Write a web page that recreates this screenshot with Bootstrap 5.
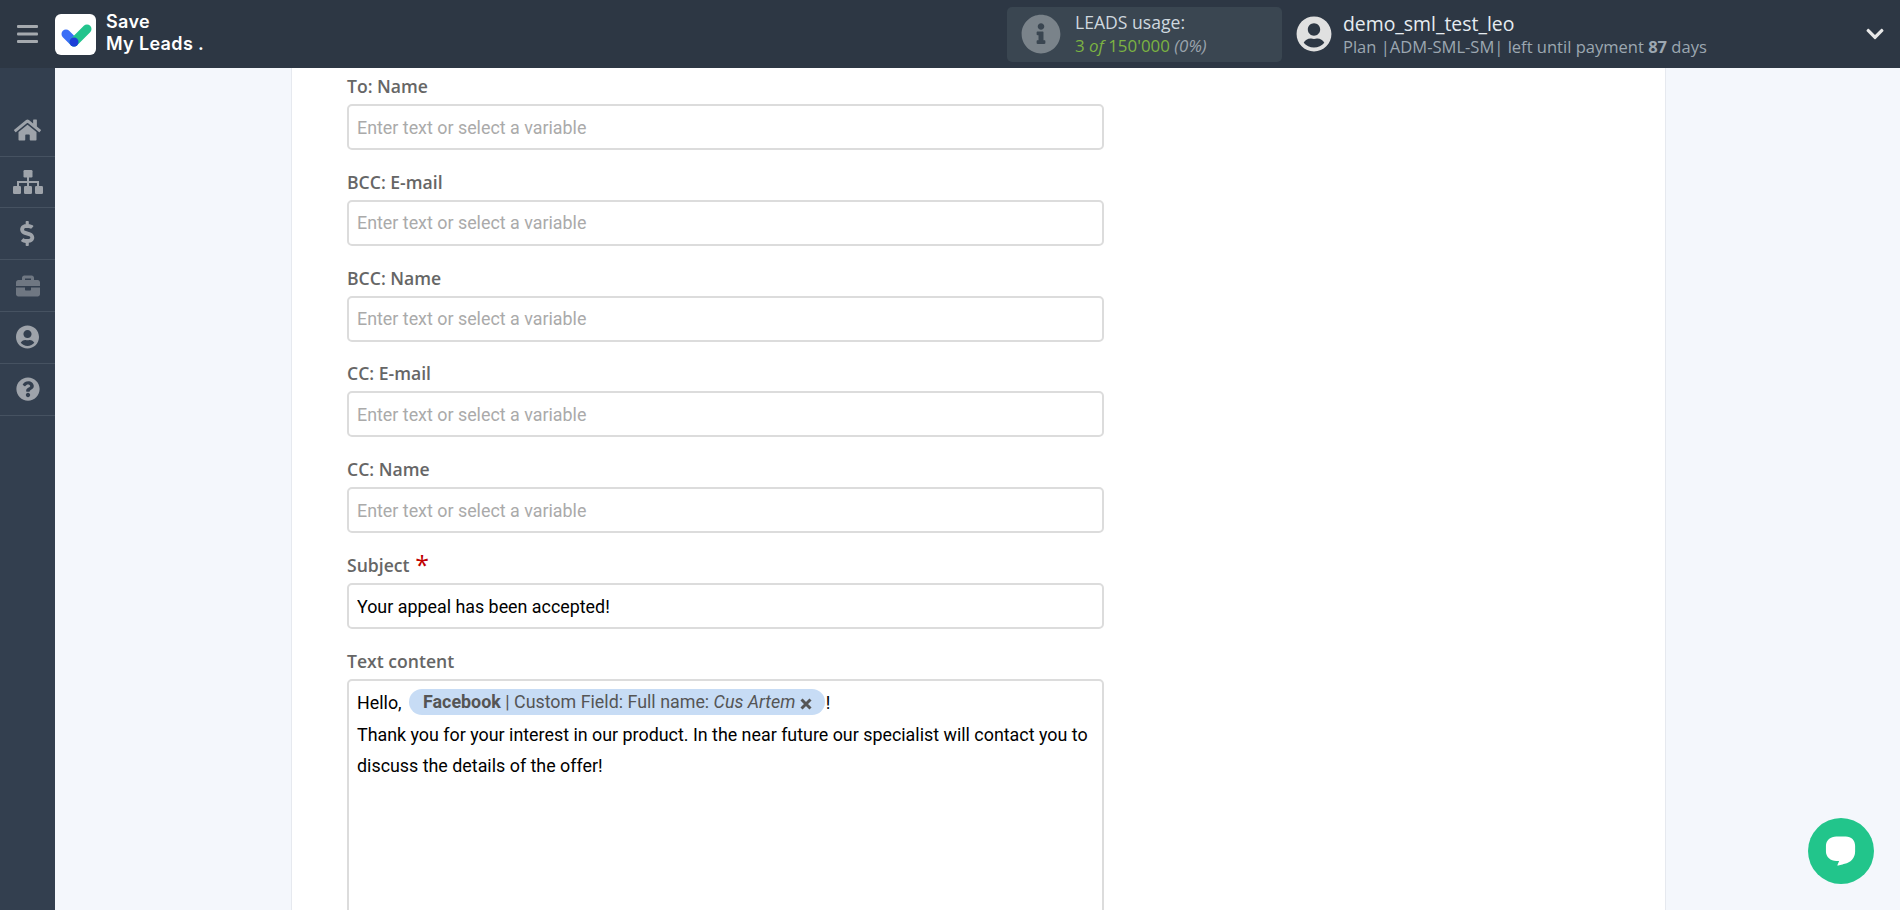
<!DOCTYPE html>
<html lang="en">
<head>
<meta charset="utf-8">
<title>Save My Leads</title>
<link href="https://cdn.jsdelivr.net/npm/bootstrap@5.3.0/dist/css/bootstrap.min.css" rel="stylesheet">
<style>
html,body{height:910px;overflow:hidden}
body{background:#f4f7fc;font-family:"Open Sans","Liberation Sans",sans-serif}
.topbar{height:68px;background:#2d3744}
.burger{width:55px;color:#a5aaaf}
.logo-box{width:41px;height:41px;background:#fff;border-radius:6px}
.logo-text{font-family:Inter,"Open Sans",sans-serif;font-weight:600;font-size:18px;line-height:22px;letter-spacing:.35px;color:#fff;margin-left:10px;margin-bottom:3px}
.usage{width:275px;height:55px;background:#3a4651;border-radius:5px;margin-left:auto;padding-left:14px;gap:14px}
.usage-title{font-size:17.6px;line-height:23px;color:#cfd8df}
.usage-line{font-size:16.9px;line-height:23px;color:#7cb342}
.usage-pct{color:#9aa4ad;font-style:italic}
.user-name{font-size:19.4px;line-height:25px;color:#e6ecf1}
.user-plan{font-size:16.55px;line-height:21px;color:#9ca7b1}
.user-block{width:618px;padding-left:14px}
.user-text{margin-left:11px}
.side{width:55px;height:842px;background:#333f4f;padding-top:36.8px}
.side-item{height:51.8px;border-bottom:1px solid #465261;color:#9ea3aa}
.side-item.dim{color:#6f7782}
.work{width:1375px;height:842px;margin-left:236px;background:#fff;border-left:1px solid #e6e9ef;border-right:1px solid #e6e9ef;padding:6px 0 0 55px}
.fld{width:757px;margin-bottom:19.83px}
.fld-label{font-size:17.6px;font-weight:600;line-height:24px;color:#666;margin-bottom:6px;display:block}
.req{color:#c00000;font-size:25px;line-height:16px;vertical-align:-2px;margin-left:1px;font-weight:400}
.fld-input{height:46px;border:2px solid #dcdcdc;border-radius:5px;padding:0 8px;font-family:Roboto,sans-serif;font-size:17.87px;color:#000}
.fld-input::placeholder{color:#aaa;opacity:1}
.txt-box{height:300px;border:2px solid #dcdcdc;border-radius:5px;padding:6.5px 8px;font-family:Roboto,sans-serif;font-size:17.87px;line-height:31.5px;color:#000}
.tag-pill{display:inline-block;height:26px;line-height:26px;background:#c7dcf5;color:#555;border-radius:13px;padding:0 13px 0 14px;margin:0 1px 0 3px;vertical-align:1px}
.tag-pill b{font-weight:700}
.chat-btn{position:absolute;left:1808px;top:818px;width:66px;height:66px;border-radius:50%;background:#22c58b}
</style>
</head>
<body>
<header class="topbar d-flex align-items-center">
  <div class="burger d-flex justify-content-center">
    <svg width="21" height="18" viewBox="0 0 21 18" fill="currentColor"><rect width="21" height="3" rx="1"/><rect y="7.5" width="21" height="3" rx="1"/><rect y="15" width="21" height="3" rx="1"/></svg>
  </div>
  <div class="logo-box d-flex align-items-center justify-content-center">
    <svg width="41" height="41" viewBox="0 0 41 41"><path d="M11 20l8 8" stroke="#3b6ef6" stroke-width="9" stroke-linecap="round"/><path d="M19 28L32 15" stroke="#22c48d" stroke-width="9" stroke-linecap="round"/><circle cx="19" cy="28" r="4.5" fill="#1c3fd8"/></svg>
  </div>
  <div class="logo-text">Save<br>My Leads .</div>
  <div class="usage d-flex align-items-center">
    <svg width="40" height="40" viewBox="0 0 512 512" fill="#7a838a"><path d="M256 8C119.043 8 8 119.083 8 256c0 136.997 111.043 248 248 248s248-111.003 248-248C504 119.083 392.957 8 256 8zm0 110c23.196 0 42 18.804 42 42s-18.804 42-42 42-42-18.804-42-42 18.804-42 42-42zm56 254c0 6.627-5.373 12-12 12h-88c-6.627 0-12-5.373-12-12v-24c0-6.627 5.373-12 12-12h12v-64h-12c-6.627 0-12-5.373-12-12v-24c0-6.627 5.373-12 12-12h64c6.627 0 12 5.373 12 12v100h12c6.627 0 12 5.373 12 12v24z"/></svg>
    <div>
      <div class="usage-title">LEADS usage:</div>
      <div class="usage-line">3 <i>of</i> 150'000 <span class="usage-pct">(0%)</span></div>
    </div>
  </div>
  <div class="user-block d-flex align-items-center">
    <svg width="36" height="36" viewBox="0 0 496 512" fill="#e0e0e0"><path d="M248 8C111 8 0 119 0 256s111 248 248 248 248-111 248-248S385 8 248 8zm0 96c48.6 0 88 39.4 88 88s-39.4 88-88 88-88-39.4-88-88 39.4-88 88-88zm0 344c-58.7 0-111.3-26.6-146.5-68.2 18.8-35.4 55.6-59.8 98.5-59.8 2.4 0 4.8.4 7.1 1.1 13 4.2 26.6 6.9 40.9 6.9 14.3 0 28-2.7 40.9-6.9 2.3-.7 4.7-1.1 7.1-1.1 42.9 0 79.7 24.4 98.5 59.8C359.3 421.4 306.7 448 248 448z"/></svg>
    <div class="user-text flex-grow-1">
      <div class="user-name">demo_sml_test_leo</div>
      <div class="user-plan">Plan |ADM-SML-SM| left until payment <b>87</b> days</div>
    </div>
    <svg class="me-3" width="18" height="20" viewBox="0 0 448 512" fill="#e8e8e8"><path d="M207.029 381.476L12.686 187.132c-9.373-9.373-9.373-24.569 0-33.941l22.667-22.667c9.357-9.357 24.522-9.375 33.901-.04L224 284.505l154.745-154.021c9.379-9.335 24.544-9.317 33.901.04l22.667 22.667c9.373 9.373 9.373 24.569 0 33.941L240.971 381.476c-9.373 9.372-24.569 9.372-33.942 0z"/></svg>
  </div>
</header>
<div class="d-flex">
  <nav class="side flex-shrink-0">
    <div class="side-item d-flex align-items-center justify-content-center"><svg width="27" height="24" viewBox="0 0 576 512" fill="currentColor"><path d="M280.37 148.26L96 300.11V464a16 16 0 0 0 16 16l112.06-.29a16 16 0 0 0 15.92-16V368a16 16 0 0 1 16-16h64a16 16 0 0 1 16 16v95.64a16 16 0 0 0 16 16.05L464 480a16 16 0 0 0 16-16V300L295.67 148.26a12.19 12.19 0 0 0-15.3 0zM571.6 251.47L488 182.56V44.05a12 12 0 0 0-12-12h-56a12 12 0 0 0-12 12v72.61L318.47 43a48 48 0 0 0-61 0L4.34 251.47a12 12 0 0 0-1.6 16.9l25.5 31A12 12 0 0 0 45.15 301l235.22-193.74a12.19 12.19 0 0 1 15.3 0L530.9 301a12 12 0 0 0 16.9-1.6l25.5-31a12 12 0 0 0-1.7-16.93z"/></svg></div>
    <div class="side-item d-flex align-items-center justify-content-center"><svg width="30" height="24" viewBox="0 0 30 24" fill="currentColor"><rect x="10.5" width="9" height="7.5" rx="1.2"/><rect y="16" width="8" height="8" rx="1.2"/><rect x="11" y="16" width="8" height="8" rx="1.2"/><rect x="22" y="16" width="8" height="8" rx="1.2"/><path d="M14 7h2v4h10v5h-2v-3h-8v3h-2v-3H6v3H4v-5h10z"/></svg></div>
    <div class="side-item d-flex align-items-center justify-content-center"><svg width="16" height="25" viewBox="0 0 320 512" fill="currentColor"><path d="M209.2 233.4l-108-31.6C88.7 198.2 80 186.5 80 173.5c0-16.3 13.2-29.5 29.5-29.5h66.3c12.2 0 24.2 3.7 34.2 10.5 6.1 4.1 14.3 3.1 19.5-2l34.8-34c7.1-6.9 6.1-18.4-1.8-24.5C238 74.8 207.4 64.1 176 64V16c0-8.8-7.2-16-16-16h-32c-8.8 0-16 7.2-16 16v48h-2.5C45.8 64-5.4 118.7.5 183.6c4.2 46.1 39.4 83.6 83.8 96.6l102.5 30c12.5 3.7 21.2 15.3 21.2 28.3 0 16.3-13.2 29.5-29.5 29.5h-66.3C100 368 88 364.3 78 357.5c-6.1-4.1-14.3-3.1-19.5 2l-34.8 34c-7.1 6.9-6.1 18.4 1.8 24.5 24.5 19.2 55.1 29.9 86.5 30v48c0 8.8 7.2 16 16 16h32c8.8 0 16-7.2 16-16v-48.2c46.6-.9 90.3-28.6 105.7-72.7 21.5-61.6-14.6-124.8-72.5-141.7z"/></svg></div>
    <div class="side-item dim d-flex align-items-center justify-content-center"><svg width="24" height="24" viewBox="0 0 512 512" fill="currentColor"><path d="M320 336c0 8.84-7.16 16-16 16h-96c-8.84 0-16-7.16-16-16v-48H0v144c0 25.6 22.4 48 48 48h416c25.6 0 48-22.4 48-48V288H320v48zm144-208h-80V80c0-25.6-22.4-48-48-48H176c-25.6 0-48 22.4-48 48v48H48c-25.6 0-48 22.4-48 48v80h512v-80c0-25.6-22.4-48-48-48zm-144 0H192V96h128v32z"/></svg></div>
    <div class="side-item d-flex align-items-center justify-content-center"><svg width="23" height="24" viewBox="0 0 496 512" fill="currentColor"><path d="M248 8C111 8 0 119 0 256s111 248 248 248 248-111 248-248S385 8 248 8zm0 96c48.6 0 88 39.4 88 88s-39.4 88-88 88-88-39.4-88-88 39.4-88 88-88zm0 344c-58.7 0-111.3-26.6-146.5-68.2 18.8-35.4 55.6-59.8 98.5-59.8 2.4 0 4.8.4 7.1 1.1 13 4.2 26.6 6.9 40.9 6.9 14.3 0 28-2.7 40.9-6.9 2.3-.7 4.7-1.1 7.1-1.1 42.9 0 79.7 24.4 98.5 59.8C359.3 421.4 306.7 448 248 448z"/></svg></div>
    <div class="side-item d-flex align-items-center justify-content-center"><svg width="24" height="24" viewBox="0 0 512 512" fill="currentColor"><path d="M504 256c0 136.997-111.043 248-248 248S8 392.997 8 256C8 119.083 119.043 8 256 8s248 111.083 248 248zM262.655 90c-54.497 0-89.255 22.957-116.549 63.758-3.536 5.286-2.353 12.415 2.715 16.258l34.699 26.31c5.205 3.947 12.621 3.008 16.665-2.122 17.864-22.658 30.113-35.797 57.303-35.797 20.429 0 45.698 13.148 45.698 32.958 0 14.976-12.363 22.667-32.534 33.976C247.128 238.528 216 254.941 216 296v4c0 6.627 5.373 12 12 12h56c6.627 0 12-5.373 12-12v-1.333c0-28.462 83.186-29.647 83.186-106.667 0-58.002-60.165-102-116.531-102zM256 338c-25.365 0-46 20.635-46 46 0 25.364 20.635 46 46 46s46-20.636 46-46c0-25.365-20.635-46-46-46z"/></svg></div>
  </nav>
  <main class="work flex-shrink-0 overflow-hidden">
    <div class="fld"><label class="fld-label">To: Name</label><input class="form-control fld-input" placeholder="Enter text or select a variable"></div>
    <div class="fld"><label class="fld-label">BCC: E-mail</label><input class="form-control fld-input" placeholder="Enter text or select a variable"></div>
    <div class="fld"><label class="fld-label">BCC: Name</label><input class="form-control fld-input" placeholder="Enter text or select a variable"></div>
    <div class="fld"><label class="fld-label">CC: E-mail</label><input class="form-control fld-input" placeholder="Enter text or select a variable"></div>
    <div class="fld"><label class="fld-label">CC: Name</label><input class="form-control fld-input" placeholder="Enter text or select a variable"></div>
    <div class="fld"><label class="fld-label">Subject <span class="req">*</span></label><input class="form-control fld-input" value="Your appeal has been accepted!"></div>
    <div class="fld"><label class="fld-label">Text content</label>
      <div class="txt-box">Hello, <span class="tag-pill"><b>Facebook</b> | Custom Field: Full name: <i>Cus Artem</i> <svg width="12" height="12" viewBox="0 0 12 12"><path d="M1.5 1.5l9 9M10.5 1.5l-9 9" stroke="#555" stroke-width="3"/></svg></span>!<br>Thank you for your interest in our product. In the near future our specialist will contact you to discuss the details of the offer!</div>
    </div>
  </main>
</div>
<div class="chat-btn d-flex align-items-center justify-content-center">
  <svg width="32" height="33" viewBox="0 0 34 34" fill="#fff"><path d="M12 1h10c6 0 10 4 10 10v6c0 7-5 12-11 13-3 1-7 2-8 2l2-5h-3C6 27 1 23 1 17v-6C1 5 6 1 12 1z"/></svg>
</div>
<script src="https://cdn.jsdelivr.net/npm/bootstrap@5.3.0/dist/js/bootstrap.bundle.min.js"></script>
</body>
</html>
